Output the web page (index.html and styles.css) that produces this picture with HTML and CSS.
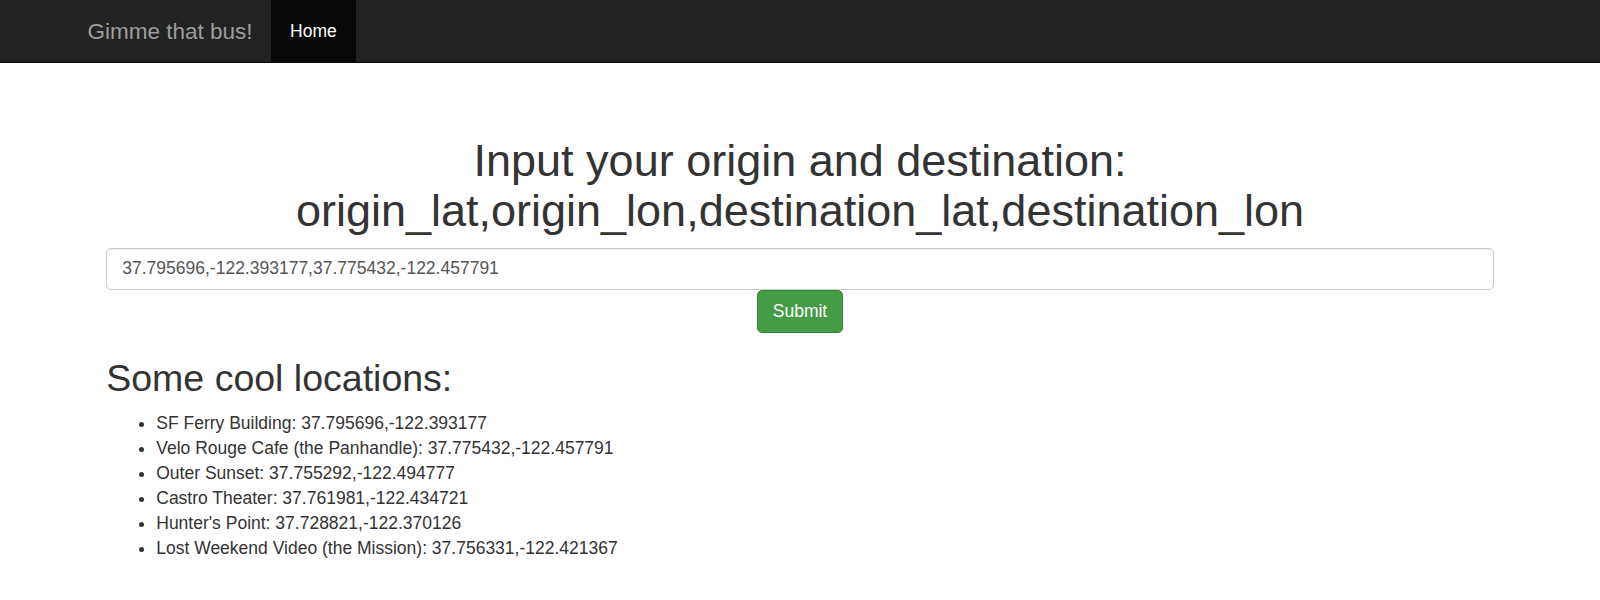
FILE: index.html
```html
<!DOCTYPE html>
<html lang="en">
<head>
<meta charset="utf-8">
<title>Gimme that bus!</title>
<link rel="stylesheet" href="styles.css">
</head>
<body>
<nav class="navbar">
  <div class="container nav-inner">
    <a class="brand" href="#">Gimme that bus!</a>
    <ul class="nav-links">
      <li class="active"><a href="#">Home</a></li>
    </ul>
  </div>
</nav>
<main class="container">
  <div class="content">
    <h1 class="title">Input your origin and destination:<br>origin_lat,origin_lon,destination_lat,destination_lon</h1>
    <form class="route-form">
      <input class="coords" type="text" value="37.795696,-122.393177,37.775432,-122.457791">
      <div class="actions">
        <button class="btn-submit" type="button">Submit</button>
      </div>
    </form>
    <h2 class="subtitle">Some cool locations:</h2>
    <ul class="locations">
      <li>SF Ferry Building: 37.795696,-122.393177</li>
      <li>Velo Rouge Cafe (the Panhandle): 37.775432,-122.457791</li>
      <li>Outer Sunset: 37.755292,-122.494777</li>
      <li>Castro Theater: 37.761981,-122.434721</li>
      <li>Hunter's Point: 37.728821,-122.370126</li>
      <li>Lost Weekend Video (the Mission): 37.756331,-122.421367</li>
    </ul>
  </div>
</main>
</body>
</html>
```

FILE: styles.css
```css
* {
  box-sizing: border-box;
}

html, body {
  margin: 0;
  padding: 0;
}

body {
  font-family: "Liberation Sans", Arial, Helvetica, sans-serif;
  font-size: 17.5px;
  line-height: 25px;
  color: #333333;
  background: #ffffff;
}

.container {
  width: 1462.5px;
  margin: 0 auto;
  padding: 0 18.75px;
}

.navbar {
  background: #222222;
  border-bottom: 1px solid #080808;
  height: 63px;
}

.nav-inner {
  display: flex;
  align-items: stretch;
  height: 62px;
}

.brand {
  display: block;
  margin-left: -18.75px;
  padding: 18.75px;
  font-size: 22.5px;
  line-height: 25px;
  color: #9d9d9d;
  text-decoration: none;
}

.nav-links {
  display: flex;
  list-style: none;
  margin: 0;
  padding: 0;
}

.nav-links li a {
  display: block;
  height: 62px;
  padding: 18.75px;
  line-height: 25px;
  color: #9d9d9d;
  text-decoration: none;
}

.nav-links li.active a {
  background: #080808;
  color: #ffffff;
}

.content {
  padding: 0 18.75px;
}

.title {
  margin: 73px 0 12.5px;
  font-size: 45px;
  line-height: 1.1;
  font-weight: 500;
  text-align: center;
  color: #333333;
}

.route-form {
  margin: 0;
}

.coords {
  display: block;
  width: 100%;
  height: 42.5px;
  padding: 7.5px 15px;
  font-family: inherit;
  font-size: 17.5px;
  line-height: 25px;
  color: #555555;
  background: #ffffff;
  border: 1px solid #cccccc;
  border-radius: 5px;
  box-shadow: inset 0 1px 1px rgba(0, 0, 0, 0.075);
  outline: none;
}

.actions {
  display: flex;
  justify-content: center;
}

.btn-submit {
  height: 42.5px;
  padding: 7.5px 15px;
  font-family: inherit;
  font-size: 17.5px;
  line-height: 25px;
  color: #ffffff;
  background: #449d44;
  border: 1px solid #398439;
  border-radius: 5px;
  cursor: pointer;
}

.subtitle {
  margin: 25px 0 12.5px;
  font-size: 37.5px;
  line-height: 1.1;
  font-weight: 500;
  color: #333333;
}

.locations {
  margin: 0 0 12.5px;
  padding-left: 50px;
}
```
